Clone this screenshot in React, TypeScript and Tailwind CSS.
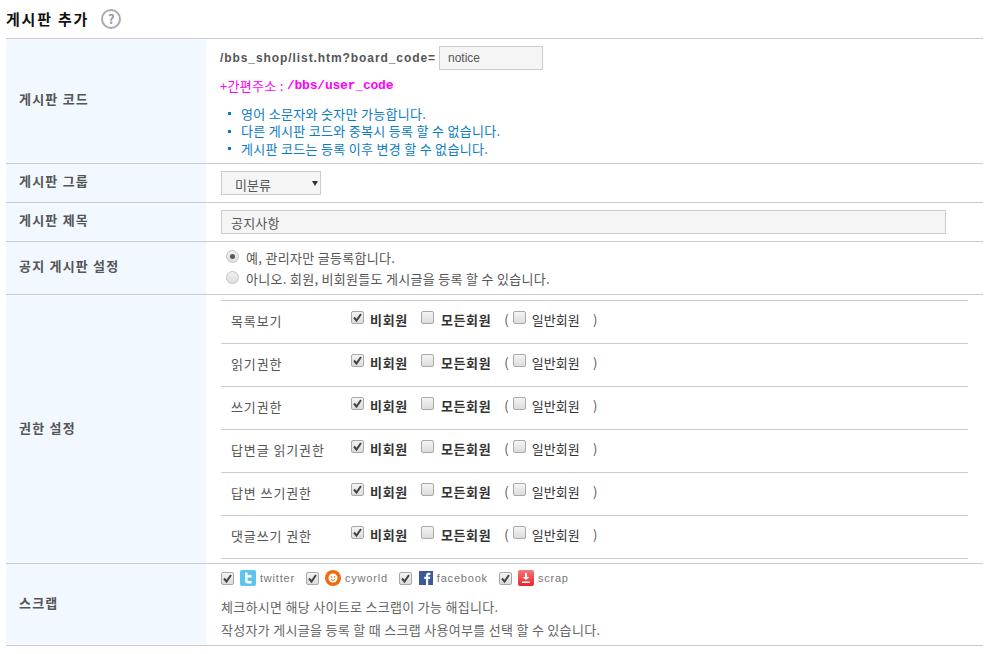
const FONT = "font-['Noto_Sans_CJK_KR','Liberation_Sans',sans-serif]";

const Check = ({ checked = false, className = "" }: { checked?: boolean; className?: string }) => (
  <span className={`w-[13px] h-[13px] shrink-0 rounded-[2px] border border-[#a9a9a9] bg-gradient-to-b from-[#f4f4f4] to-[#dcdcdc] flex items-center justify-center ${className}`}>
    {checked && (
      <svg width="11" height="11" viewBox="0 0 11 11" fill="none">
        <path d="M2 5.5 L4.5 8.5 L9 2" stroke="#444" strokeWidth="2" />
      </svg>
    )}
  </span>
);

const Radio = ({ checked = false }: { checked?: boolean }) => (
  <span className="w-[13px] h-[13px] mb-[3px] shrink-0 rounded-full border border-[#c4c4c4] bg-gradient-to-b from-[#f0f0f0] to-[#dedede] flex items-center justify-center">
    {checked && <span className="w-[5px] h-[5px] rounded-full bg-[#555]" />}
  </span>
);

const Row = ({ label, children, className, labelClass = "pb-[4px]" }: { label: string; children: React.ReactNode; className: string; labelClass?: string }) => (
  <div className={`flex border-b border-[#cccccc] ${className}`}>
    <div className={`w-[200px] shrink-0 bg-[#f1f8ff] pl-[13px] flex items-center text-[13px] font-bold text-[#555] tracking-[1.2px] ${labelClass}`}>
      {label}
    </div>
    <div className="flex-1 min-w-0">{children}</div>
  </div>
);

const perms = ["목록보기", "읽기권한", "쓰기권한", "답변글 읽기권한", "답변 쓰기권한", "댓글쓰기 권한"];

const PermRow = ({ name }: { name: string }) => (
  <div className="h-[43px] border-b border-[#cccccc] flex items-center pl-[10px] pb-[4px] text-[13px] text-[#555]">
    <span className="w-[120px] mt-[2px] tracking-[0.9px]">{name}</span>
    <Check checked className="mb-[6px]" />
    <b className="ml-[6px] text-[#333] tracking-[0.7px]">비회원</b>
    <Check className="ml-[13px] mb-[6px]" />
    <b className="ml-[7px] text-[#333] tracking-[0.6px]">모든회원</b>
    <span className="ml-[13px]">(</span>
    <Check className="ml-[4px] mb-[6px]" />
    <span className="ml-[6px] text-[#333] tracking-[0.1px]">일반회원</span>
    <span className="ml-[13px]">)</span>
  </div>
);

const Sns = ({ icon, label }: { icon: React.ReactNode; label: string }) => (
  <div className="flex items-center mr-[11px]">
    <Check checked />
    <span className="ml-[6px] mb-[2px]">{icon}</span>
    <span className="ml-[4px] text-[11px] text-[#777] tracking-[0.8px] font-['Liberation_Sans',sans-serif]">{label}</span>
  </div>
);

export default function App() {
  return (
    <div className={`w-[988px] h-[654px] bg-white overflow-hidden px-[6px] ${FONT}`}>
      <div className="w-[977px]">
        <div className="h-[38px] flex items-center">
          <h1 className="text-[15px] font-bold text-[#111] tracking-[1.8px]">게시판 추가</h1>
          <span className="ml-[12px] w-[20px] h-[20px] rounded-full border-2 border-[#aaa] text-[#999] text-[13px] font-bold flex items-center justify-center">?</span>
        </div>
        <div className="border-t border-[#cccccc]">
          <Row label="게시판 코드" className="h-[125px]">
            <div className="pl-[14px] pt-[7px]">
              <div className="flex items-center h-[24px] font-['Liberation_Sans',sans-serif] text-[12px] font-bold text-[#555] tracking-[0.92px]">
                /bbs_shop/list.htm?board_code=
                <span className="ml-[3px] w-[104px] h-[24px] bg-[#f5f5f5] border border-[#ccc] pl-[8px] flex items-center text-[12px] font-normal text-[#555] tracking-normal">notice</span>
              </div>
              <div className="mt-[6px] h-[20px] flex items-center text-[13px] text-[#f0f] tracking-[0.3px]">
                +간편주소 :&nbsp;<b className="font-['Liberation_Mono',monospace] text-[13px] tracking-[-0.2px]">/bbs/user_code</b>
              </div>
              <ul className="mt-[9px] pl-[8px] text-[13px] text-[#0a7cc4] leading-[17.4px] tracking-[0.3px]">
                {["영어 소문자와 숫자만 가능합니다.", "다른 게시판 코드와 중복시 등록 할 수 없습니다.", "게시판 코드는 등록 이후 변경 할 수 없습니다."].map((t) => (
                  <li key={t} className="flex items-center">
                    <span className="w-[3px] h-[3px] bg-[#0a7cc4] mr-[10px]" />
                    {t}
                  </li>
                ))}
              </ul>
            </div>
          </Row>
          <Row label="게시판 그룹" className="h-[39px]">
            <div className="pl-[15px] pt-[7px]">
              <div className="relative w-[100px] h-[24px] border border-[#ccc] bg-[#f5f5f5] pl-[13px] pt-[4px] flex items-center text-[13px] text-[#555]">
                미분류
                <svg width="6" height="5" viewBox="0 0 6 5" className="absolute right-[2px] top-[9px]"><path d="M0 0 H6 L3 5 z" fill="#333" /></svg>
              </div>
            </div>
          </Row>
          <Row label="게시판 제목" className="h-[39px]">
            <div className="pl-[15px] pt-[7px]">
              <div className="w-[725px] h-[24px] border border-[#ccc] bg-[#f5f5f5] pl-[9px] pt-[2px] flex items-center text-[13px] text-[#555] tracking-[0.2px]">공지사항</div>
            </div>
          </Row>
          <Row label="공지 게시판 설정" className="h-[53px]">
            <div className="pl-[20px] pt-[6px] text-[13px] text-[#555] tracking-[0.3px]">
              <div className="flex items-center h-[20px]"><Radio checked /><span className="ml-[7px]">예, 관리자만 글등록합니다.</span></div>
              <div className="flex items-center h-[20px] mt-[1px]"><Radio /><span className="ml-[7px]">아니오. 회원, 비회원들도 게시글을 등록 할 수 있습니다.</span></div>
            </div>
          </Row>
          <Row label="권한 설정" className="h-[269px]" labelClass="pb-[2px]">
            <div className="pl-[15px] pr-[15px] pt-[5px]">
              <div className="border-t border-[#cccccc]">
                {perms.map((p) => <PermRow key={p} name={p} />)}
              </div>
            </div>
          </Row>
          <Row label="스크랩" className="h-[82px]">
            <div className="pl-[15px] pt-[5px]">
              <div className="flex items-center h-[19px]">
                <Sns label="twitter" icon={
                  <svg width="16" height="16" viewBox="0 0 16 16" className="block"><rect width="16" height="16" rx="2" fill="#5cc4ee" /><path d="M5 2.5 h2.5 v2.5 h4 v2.5 h-4 v2 q0 1.5 1.5 1.5 h2.5 v2.5 h-3.5 q-3 0-3-3 z" fill="#fff" /></svg>
                } />
                <Sns label="cyworld" icon={
                  <svg width="16" height="16" viewBox="0 0 16 16" className="block"><circle cx="8" cy="8" r="8" fill="#f26a0e" /><circle cx="8" cy="8" r="4.5" fill="#fff" /><circle cx="6.5" cy="7" r="0.8" fill="#f26a0e" /><circle cx="9.5" cy="7" r="0.8" fill="#f26a0e" /><path d="M6 9.5 q2 2 4 0" stroke="#f26a0e" fill="none" /></svg>
                } />
                <Sns label="facebook" icon={
                  <svg width="14" height="14" viewBox="0 0 16 16" className="block ml-px"><rect width="16" height="16" fill="#3b5998" /><path d="M8 16 V9 H6 V6.500 H8 V5 q0-3 3-3 h2 v2.500 h-1.500 q-1 0-1 1 V6.500 H13 L12.500 9 H10.500 V16 z" fill="#fff" /></svg>
                } />
                <Sns label="scrap" icon={
                  <svg width="16" height="16" viewBox="0 0 16 16" className="block"><defs><linearGradient id="scrapRed" x1="0" y1="0" x2="0" y2="1"><stop offset="0" stopColor="#f47a7a" /><stop offset="1" stopColor="#e8222a" /></linearGradient></defs><rect width="16" height="16" rx="2" fill="url(#scrapRed)" /><path d="M7 3 h2 v4 h2.500 L8 10 L4.500 7 H7 z M4 11.500 h8 v1.500 h-8 z" fill="#fff" /></svg>
                } />
              </div>
              <p className="mt-[7px] text-[13px] text-[#666] tracking-[0.3px] leading-[23px]">체크하시면 해당 사이트로 스크랩이 가능 해집니다.</p>
              <p className="text-[13px] text-[#666] tracking-[0.3px] leading-[23px]">작성자가 게시글을 등록 할 때 스크랩 사용여부를 선택 할 수 있습니다.</p>
            </div>
          </Row>
        </div>
      </div>
    </div>
  );
}
